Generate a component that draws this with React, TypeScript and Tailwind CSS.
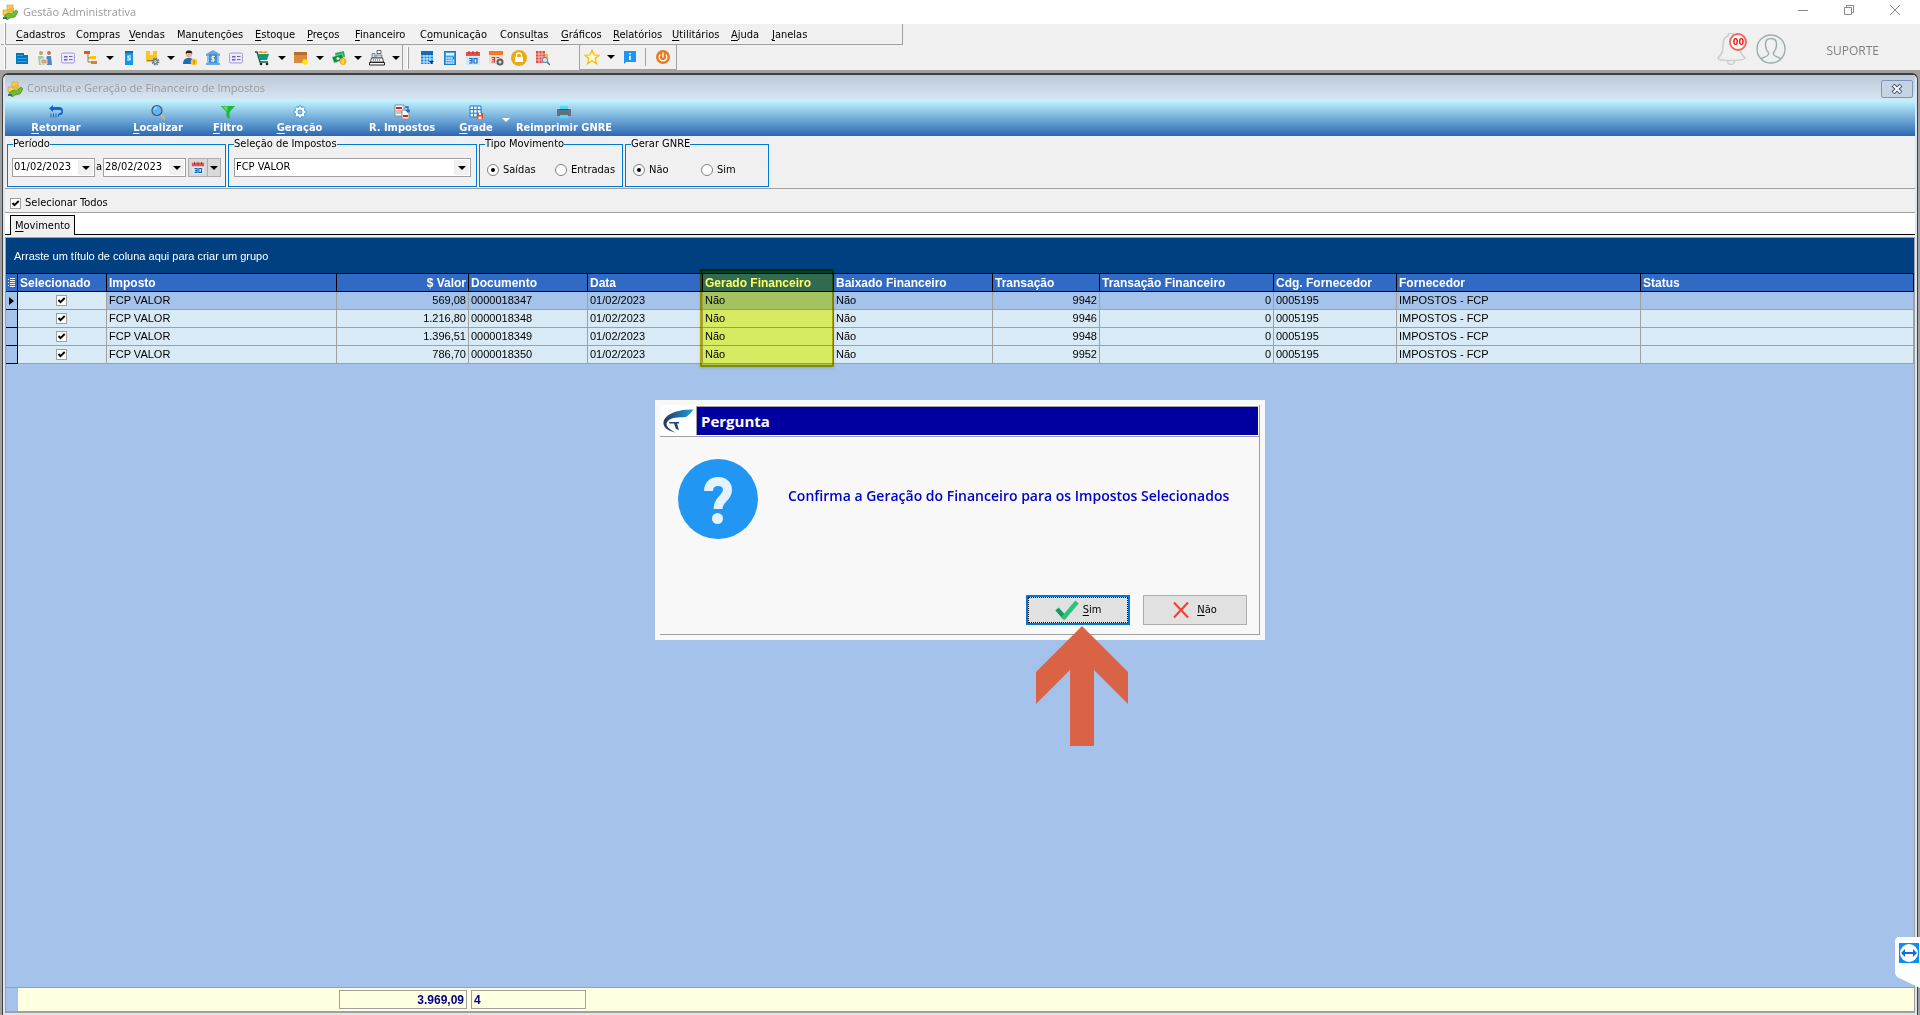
import { useState } from 'react';
import type { ReactNode } from 'react';

interface IconProps {
  name: string;
  className?: string;
}

interface ToolItem {
  icon: string;
  label: string;
  menu?: boolean;
}

const shapes: Record<string, ReactNode> = {
  app: (
    <>
      <path d="M5 1h6v5H5zM1 6h7v5H1z" fill="#f3cf5b" stroke="#c99a2a" strokeWidth=".6" />
      <path d="M9 3l3 1v4l-4 1-3-2" fill="#e9b93e" />
      <path d="M2 12l4-3 3 1 5-4 2 2-3 5-5 1-3 2z" fill="#6bbf2c" stroke="#3d7d18" strokeWidth=".6" />
      <path d="M1 13h4v2H1z" fill="#3d6a8a" />
    </>
  ),
  building: (
    <>
      <path d="M2 3h8v2h4v9H2z" fill="#0277bd" />
      <path d="M3 5h6v1H3zM3 8h10v1H3zM3 11h10v1H3z" fill="#2ba4f0" />
    </>
  ),
  people: (
    <>
      <circle cx="4" cy="3" r="2" fill="#c49a80" />
      <circle cx="12" cy="3" r="2" fill="#b97a5a" />
      <path d="M1 6h5l2 4v5H2z" fill="#a9c9a4" />
      <path d="M10 6h4l1 9h-5l-2-4z" fill="#4a86c8" />
      <path d="M4 9h6v5H4z" fill="#d9a184" stroke="#fff" strokeWidth=".7" />
    </>
  ),
  card: (
    <>
      <rect x="1.500" y="3" width="13" height="10" rx="1.500" fill="#eeeafc" stroke="#a79bdc" />
      <path d="M4 6h3.500v1.500H4zM4 9h3.500v1.500H4zM9 6h3.500v1H9zM9 9h3.500v1H9z" fill="#6f60bd" />
    </>
  ),
  tree: (
    <>
      <path d="M5 4v8h4M5 8h4" fill="none" stroke="#8a7a60" />
      <path d="M1 1h6v3H1z" fill="#e6562c" />
      <path d="M7 6h6v3H7z" fill="#ffc400" />
      <path d="M8 11h6v3H8z" fill="#f07a1c" />
    </>
  ),
  book: (
    <>
      <path d="M4 1h8v14H4z" fill="#1098e6" />
      <path d="M4 1h8v2H4z" fill="#0a6cab" />
      <path d="M10 6H7v2h2v2H6" fill="none" stroke="#fff" strokeWidth="1.200" />
    </>
  ),
  boxgear: (
    <>
      <path d="M2 1h11v11H2z" fill="#fcc42c" />
      <path d="M6 1h3v4H6z" fill="#fff0b8" />
      <path d="M3 10h6v1H3z" fill="#a77a12" />
      <circle cx="11.500" cy="11.500" r="3" fill="none" stroke="#5c7a94" strokeWidth="1.800" strokeDasharray="1.500 .8" />
      <circle cx="11.500" cy="11.500" r="2" fill="none" stroke="#4f6f8c" />
    </>
  ),
  user: (
    <>
      <circle cx="7" cy="4.500" r="3" fill="#f2b07d" />
      <path d="M3.800 4C3.500 1 5 .5 7 .5s3.500.6 3.200 3.500L9 3H5z" fill="#222" />
      <path d="M1 14c0-4 2-6 6-6s5 2 5 6z" fill="#1e6db5" />
      <circle cx="12" cy="12" r="3.300" fill="#fcc42c" />
      <path d="M12 10v4" stroke="#b87b00" />
    </>
  ),
  bank: (
    <>
      <path d="M8 0l7 4v2H1V4zM1 13h14v2H1z" fill="#6aa9e0" />
      <path d="M2 6h3v7H2zM11 6h3v7h-3z" fill="#8fbfe8" />
      <path d="M4 4h8v9H4z" fill="#3f8fd6" />
      <path d="M10 6.500H7v2.200h2v2.200H6M8 5.500v6.500" fill="none" stroke="#fff" />
    </>
  ),
  cart: (
    <>
      <path d="M3 2l3-1 2 1 3-1 2 2H4z" fill="#f39a24" />
      <path d="M0 2h2l3 10h8" fill="none" stroke="#0b5c4a" strokeWidth="1.400" />
      <path d="M3 4h11l-2 6H5z" fill="#129a77" />
      <circle cx="6" cy="14" r="1.300" fill="#222" />
      <circle cx="12" cy="14" r="1.300" fill="#222" />
    </>
  ),
  box: (
    <>
      <path d="M1 2h13v11H1z" fill="#d98a3a" />
      <path d="M1 2h13v3H1z" fill="#b96d25" />
      <circle cx="12" cy="12" r="2.800" fill="#ffe70a" />
    </>
  ),
  money: (
    <>
      <path d="M4 3l9-2 1 6-9 2z" fill="#2fae5c" />
      <path d="M1 7l10-3 2 6-10 3z" fill="#178a45" stroke="#bfeccc" strokeWidth=".5" />
      <circle cx="7" cy="8.500" r="1.600" fill="#c8f0d4" />
      <circle cx="12" cy="11.500" r="3.400" fill="#f7b51e" />
      <path d="M12 9.500v4" stroke="#fff6c0" />
    </>
  ),
  register: (
    <>
      <path d="M8 .5h4v3H8z" fill="#fff" stroke="#444" strokeWidth=".8" />
      <path d="M3 3.500h3v4H3zM7 5h6v3H7z" fill="#b9dcf2" stroke="#555" strokeWidth=".6" />
      <path d="M2.500 8h11l1 4h-13z" fill="#fff" stroke="#333" strokeWidth=".9" />
      <path d="M4 10h8" stroke="#333" strokeDasharray="1 1" />
      <path d="M.5 12.500h15v2.500H.5z" fill="#fff" stroke="#222" />
    </>
  ),
  grid: (
    <>
      <path d="M2 2h12v12H2z" fill="#1187dc" />
      <path d="M2 6h12M2 9h12M2 12h12M5 5v9M8 5v9M11 5v9" stroke="#e8f5ff" strokeWidth=".9" />
      <path d="M2 1h12v4H2z" fill="#0a70bd" />
      <path d="M10 11h5l-2.500 3z" fill="#12395e" />
    </>
  ),
  calc: (
    <>
      <rect x="2.500" y="1.500" width="11" height="13" fill="#3fa2e8" stroke="#1b7bc4" />
      <path d="M4 3h8v2.500H4z" fill="#e6f5ff" />
      <path d="M4 8h8M4 10.500h8M4 13h8" stroke="#e6f5ff" strokeWidth="1.400" strokeDasharray="1.500 .7" />
      <path d="M11.500 7v2" stroke="#e33" />
    </>
  ),
  calendar: (
    <>
      <path d="M1 6h14v9H1z" fill="#cfe8fb" />
      <path d="M1 2h14v4H1z" fill="#ef5043" />
      <path d="M4 1v3M8 1v3M12 1v3" stroke="#9c2b2b" />
      <path d="M4 8.500h3v4.500H4M4.500 10.700H7M9 8.500h3v4.500H9z" fill="none" stroke="#1565c0" strokeWidth="1.200" />
    </>
  ),
  calgear: (
    <>
      <path d="M1 5h14v9H1z" fill="#f3ddd2" />
      <path d="M1 1h14v4H1z" fill="#f07b23" />
      <path d="M3.500 7.500h3v4.500h-3M4 9.700h2.500M8.500 7.500h2.500" fill="none" stroke="#cf3b2c" strokeWidth="1.200" />
      <circle cx="12" cy="12" r="2.500" fill="none" stroke="#50606c" strokeWidth="2" />
    </>
  ),
  lock: (
    <>
      <circle cx="8" cy="8" r="8" fill="#e8ab15" />
      <path d="M5.500 7V5.500a2.500 2.500 0 015 0V7" fill="none" stroke="#fff" strokeWidth="1.300" />
      <path d="M4 7h8v5H4z" fill="#fff" />
    </>
  ),
  search: (
    <>
      <path d="M2 1h9v12H2z" fill="#e34d43" />
      <path d="M2 4h9M2 7h9M2 10h9M5 1v12M8 1v12" stroke="#f8d4cf" strokeWidth=".8" />
      <path d="M11 4h3v4h-3z" fill="#f5c020" />
      <circle cx="11" cy="10" r="2.700" fill="#cde7f9" stroke="#5a88a8" />
      <path d="M13 12l3 3" stroke="#5b6b78" strokeWidth="1.400" />
    </>
  ),
  star: (
    <path d="M8 1.200l2 4.700 5 .4-3.800 3.300 1.200 5L8 11.900l-4.400 2.700 1.200-5L1 6.300l5-.4z" fill="#fff8dc" stroke="#fcc419" strokeWidth="1.500" />
  ),
  info: (
    <>
      <path d="M2 2h12v11H4l-2 2z" fill="#1e95f3" />
      <path d="M7.200 4h1.600v1.600H7.200zM7.200 6.800h1.600V11H7.200z" fill="#fff" />
    </>
  ),
  power: (
    <>
      <circle cx="8" cy="8" r="7" fill="#e67c1f" />
      <path d="M5.300 5.400a3.800 3.800 0 105.400 0M8 3.500v5" fill="none" stroke="#fff" strokeWidth="1.400" />
    </>
  ),
  back: (
    <>
      <path d="M1 4.500L5 1v2h6a4 4 0 014 4v1a3 3 0 01-3 3h-1V9h1a1.500 1.500 0 000-3H5v2z" fill="#1763cf" />
      <path d="M3 9.500v4M5.500 9.500v4M8 9.500v4M10.500 10v3" stroke="#1763cf" />
    </>
  ),
  lens: (
    <>
      <circle cx="7" cy="6.500" r="5" fill="#62b8f5" stroke="#47566a" strokeWidth="1.200" />
      <path d="M4 6a3 3 0 013-2.500" fill="none" stroke="#c9ebff" />
      <path d="M11 11l4 4" stroke="#e0b469" strokeWidth="2" />
    </>
  ),
  funnel: (
    <>
      <path d="M1 2h14l-5.500 6v7l-3-2V8z" fill="#21b43a" />
      <path d="M3 2.500h5l-1 5z" fill="#5fe06c" />
    </>
  ),
  gear: (
    <>
      <path
        d="M6.700 2h2.600l.4 1.700 1.500-.9 1.900 1.900-.9 1.500 1.800.5v2.600l-1.800.4.9 1.600-1.900 1.800-1.500-.9-.4 1.800H6.700l-.4-1.800-1.500.9-1.900-1.800.9-1.600L2 9.300V6.700l1.800-.5-.9-1.500 1.900-1.900 1.500.9z"
        fill="#fff"
        stroke="#3b9ad8"
        strokeWidth=".9"
      />
      <circle cx="8" cy="8" r="2" fill="#8ec8ea" stroke="#3b9ad8" />
    </>
  ),
  docs: (
    <>
      <path d="M1 1h9v11H1z" fill="#fff" stroke="#8b8b8b" />
      <path d="M2 3h6v2H2z" fill="#e01f1f" />
      <path d="M2 7h6M2 9h6" stroke="#888" />
      <path d="M8 6h7v9H8z" fill="#fff" stroke="#8b8b8b" />
      <path d="M9 11h5v2H9z" fill="#e01f1f" />
      <path d="M11 3h3v5M12 6l2 2 2-2" fill="none" stroke="#1d6fb8" strokeWidth="1.300" />
    </>
  ),
  gridsave: (
    <>
      <path d="M2 2h11v11H2z" fill="#e8f7ff" stroke="#1b7fd0" />
      <path d="M2 5.600h11M2 9.200h11M5.600 2v11M9.200 2v11" stroke="#1b7fd0" />
      <path d="M9 9h6v6H9z" fill="#f04a12" />
      <path d="M11 9h2v2h-2zM10.500 12.500h3V15h-3z" fill="#fff" />
    </>
  ),
  printer: (
    <>
      <path d="M4 2h8v4H4zM4 11h8v3H4z" fill="#45ddff" />
      <path d="M1 5h14v7h-3v-1H4v1H1z" fill="#62707b" />
      <path d="M4 5h8v1H4z" fill="#3c464d" />
    </>
  ),
};

function Icon({ name, className = 'size-4' }: IconProps) {
  return (
    <svg viewBox="0 0 16 16" className={`${className} shrink-0`} aria-hidden="true">
      {shapes[name]}
    </svg>
  );
}

function Caret({ className = 'text-black' }: { className?: string }) {
  return (
    <svg viewBox="0 0 8 4" className={`w-2 h-1 shrink-0 ${className}`} aria-hidden="true">
      <path d="M0 0h8L4 4z" fill="currentColor" />
    </svg>
  );
}

// Label with its accelerator letter underlined
function Hot({ text, at = 0 }: { text: string; at?: number }) {
  return (
    <>
      {text.slice(0, at)}
      <span className="underline underline-offset-2">{text.charAt(at)}</span>
      {text.slice(at + 1)}
    </>
  );
}

const menu = [
  { label: 'Cadastros', at: 0, width: 'w-[60px]' },
  { label: 'Compras', at: 2, width: 'w-[53px]' },
  { label: 'Vendas', at: 0, width: 'w-[48px]' },
  { label: 'Manutenções', at: 2, width: 'w-[78px]' },
  { label: 'Estoque', at: 0, width: 'w-[52px]' },
  { label: 'Preços', at: 0, width: 'w-[48px]' },
  { label: 'Financeiro', at: 0, width: 'w-[65px]' },
  { label: 'Comunicação', at: 1, width: 'w-[80px]' },
  { label: 'Consultas', at: 5, width: 'w-[61px]' },
  { label: 'Gráficos', at: 0, width: 'w-[52px]' },
  { label: 'Relatórios', at: 0, width: 'w-[59px]' },
  { label: 'Utilitários', at: 0, width: 'w-[59px]' },
  { label: 'Ajuda', at: 0, width: 'w-[41px]' },
  { label: 'Janelas', at: 0, width: 'w-[48px]' },
];

const mainTools: ToolItem[] = [
  { icon: 'building', label: 'Empresas' },
  { icon: 'people', label: 'Clientes' },
  { icon: 'card', label: 'Cartões' },
  { icon: 'tree', label: 'Plano de contas', menu: true },
  { icon: 'book', label: 'Tabela de preços' },
  { icon: 'boxgear', label: 'Produtos', menu: true },
  { icon: 'user', label: 'Vendedores' },
  { icon: 'bank', label: 'Bancos' },
  { icon: 'card', label: 'Cheques' },
];

const movementTools: ToolItem[] = [
  { icon: 'cart', label: 'Compras', menu: true },
  { icon: 'box', label: 'Estoque', menu: true },
  { icon: 'money', label: 'Financeiro', menu: true },
  { icon: 'register', label: 'Caixa', menu: true },
];

const utilityTools: ToolItem[] = [
  { icon: 'grid', label: 'Agenda' },
  { icon: 'calc', label: 'Calculadora' },
  { icon: 'calendar', label: 'Calendário' },
  { icon: 'calgear', label: 'Configurar calendário' },
  { icon: 'lock', label: 'Bloquear' },
  { icon: 'search', label: 'Pesquisar' },
];

const actions = [
  { label: 'Retornar', icon: 'back', at: 0, width: 'w-[102px]' },
  { label: 'Localizar', icon: 'lens', at: 0, width: 'w-[102px]' },
  { label: 'Filtro', icon: 'funnel', at: 0, width: 'w-[38px]' },
  { label: 'Geração', icon: 'gear', at: 0, width: 'w-[105px]' },
  { label: 'R. Impostos', icon: 'docs', at: -1, width: 'w-[100px]' },
  { label: 'Grade', icon: 'gridsave', at: 0, width: 'w-[48px]' },
];

const columns = [
  { label: 'Selecionado', width: 'w-[89px]' },
  { label: 'Imposto', width: 'w-[230px]' },
  { label: '$ Valor', width: 'w-[132px]', right: true },
  { label: 'Documento', width: 'w-[119px]' },
  { label: 'Data', width: 'w-[115px]' },
  { label: 'Gerado Financeiro', width: 'w-[131px]', highlight: true },
  { label: 'Baixado Financeiro', width: 'w-[159px]' },
  { label: 'Transação', width: 'w-[107px]' },
  { label: 'Transação Financeiro', width: 'w-[174px]' },
  { label: 'Cdg. Fornecedor', width: 'w-[123px]' },
  { label: 'Fornecedor', width: 'w-[244px]' },
  { label: 'Status', width: '' },
];

const rows = [
  { valor: '569,08', documento: '0000018347', transacao: '9942' },
  { valor: '1.216,80', documento: '0000018348', transacao: '9946' },
  { valor: '1.396,51', documento: '0000018349', transacao: '9948' },
  { valor: '786,70', documento: '0000018350', transacao: '9952' },
];

function ToolButtons({ items }: { items: ToolItem[] }) {
  return (
    <>
      {items.map((item) => (
        <div key={item.icon + item.label} className="flex items-center">
          <button type="button" aria-label={item.label} className="w-[23px] h-6 flex items-center justify-center">
            <Icon name={item.icon} />
          </button>
          {item.menu && (
            <button type="button" aria-label={`${item.label}: opções`} className="w-[15px] h-6 flex items-center justify-center">
              <Caret />
            </button>
          )}
        </div>
      ))}
    </>
  );
}

function Grip() {
  return <div className="w-[2px] h-[22px] border-l border-white bg-[#a0a0a0] shrink-0" />;
}

function Check({ checked, label, onChange }: { checked: boolean; label: string; onChange: () => void }) {
  return (
    <span className="relative inline-block size-[11px] shrink-0 align-middle">
      <input
        type="checkbox"
        aria-label={label}
        checked={checked}
        onChange={onChange}
        className="appearance-none block size-[11px] bg-white border border-[#a0a0a0]"
      />
      {checked && (
        <svg viewBox="0 0 11 11" className="absolute inset-0 pointer-events-none" aria-hidden="true">
          <path d="M2.500 5l2 2.200L8.700 3" fill="none" stroke="#000" strokeWidth="1.900" />
        </svg>
      )}
    </span>
  );
}

function RadioGroup({ legend, name, options }: { legend: string; name: string; options: string[] }) {
  const [value, setValue] = useState(options[0]);
  return (
    <fieldset className="w-[144px] min-w-0 h-[50px] border border-[#0078d7]">
      <legend className="ml-[5px] leading-[14px]">{legend}</legend>
      <div className="flex pl-[7px] pt-3">
        {options.map((option) => (
          <label key={option} className="w-[68px] shrink-0 flex items-center gap-1 leading-[14px]">
            <input
              type="radio"
              name={name}
              checked={value === option}
              onChange={() => setValue(option)}
              className="appearance-none size-3 shrink-0 rounded-full border border-[#808080] bg-white flex items-center justify-center checked:before:block checked:before:size-1 checked:before:rounded-full checked:before:bg-black"
            />
            {option}
          </label>
        ))}
      </div>
    </fieldset>
  );
}

function DateField({ label, initial }: { label: string; initial: string }) {
  const [value, setValue] = useState(initial);
  return (
    <div className="w-[83px] h-[19px] flex bg-white border border-[#a0a0a0] p-px">
      <input aria-label={label} value={value} onChange={(e) => setValue(e.target.value)} className="w-[64px] min-w-0 outline-none" />
      <button type="button" aria-label={`Abrir calendário: ${label}`} className="flex-1 bg-[#f0f0f0] flex items-center justify-center">
        <Caret />
      </button>
    </div>
  );
}

function TitleBar() {
  return (
    <header className="h-6 flex items-center bg-white pl-[2px] pr-[2px]">
      <Icon name="app" />
      <h1 className="ml-[5px] flex-1 font-['Open_Sans',sans-serif] text-[11px] text-[#999999]">Gestão Administrativa</h1>
      <div className="flex text-[#888888] pb-1">
        <button type="button" aria-label="Minimizar" className="w-[46px] flex justify-center">
          <svg viewBox="0 0 10 10" className="size-[10px]"><path d="M0 5.500h10" stroke="currentColor" /></svg>
        </button>
        <button type="button" aria-label="Restaurar" className="w-[46px] flex justify-center">
          <svg viewBox="0 0 10 10" className="size-[10px]">
            <path d="M.5 2.500h7v7h-7zM2.500 2.500v-2h7v7h-2" fill="none" stroke="currentColor" />
          </svg>
        </button>
        <button type="button" aria-label="Fechar" className="w-[46px] flex justify-center">
          <svg viewBox="0 0 10 10" className="size-[10px]"><path d="M0 0l10 10M10 0L0 10" stroke="currentColor" /></svg>
        </button>
      </div>
    </header>
  );
}

function Support() {
  return (
    <div className="flex items-center pr-[41px] pt-1">
      <div className="relative w-[30px] h-8 mr-[9px]">
        <svg viewBox="0 0 30 32" className="w-[30px] h-8" fill="none" stroke="#cccccc" strokeWidth="1.500" aria-hidden="true">
          <path d="M11 3a3 3 0 016 0c4 1 6 4 6 9 0 7 1 9 5 13-1 2-7 2.500-14 2.500S1 27 1 25c4-4 5-6 5-13 0-5 1-8 5-9zM10.500 28a3.500 3.500 0 007 0" />
        </svg>
        <span className="absolute left-3 top-0 size-[18px] rounded-full bg-white border-2 border-[#f0695c] text-[#ee1111] font-bold text-[9px] leading-[14px] text-center">
          00
        </span>
      </div>
      <svg viewBox="0 0 30 30" className="size-[30px] mr-10" fill="none" stroke="#9aadad" strokeWidth="1.400" aria-hidden="true">
        <circle cx="15" cy="15" r="14" />
        <path d="M5 25c2-2 6-2 7.500-4.500v-2C10 16 9.500 13 9.500 10c0-3.500 2-5.500 5.500-5.500s5.500 2 5.500 5.500c0 3-.5 6-3 8.500v2C19 23 23 23 25 25" />
      </svg>
      <a href="#suporte" className="pt-1 font-['Open_Sans',sans-serif] text-[12px] text-[#808080]">SUPORTE</a>
    </div>
  );
}

function TopBars() {
  return (
    <div className="h-[46px] flex justify-between bg-[#f0f0f0]">
      <div className="pl-px">
        <nav className="w-[902px] h-[21px] flex items-center border-r border-b border-[#a0a0a0] pl-[3px]">
          <Grip />
          <div className="flex pl-[10px] pt-[3px]">
            {menu.map((item) => (
              <button key={item.label} type="button" className={`${item.width} text-left whitespace-nowrap`}>
                <Hot text={item.label} at={item.at} />
              </button>
            ))}
          </div>
        </nav>
        <div className="h-[25px] flex">
          <div className="w-[402px] flex items-center border-r border-[#a0a0a0] pl-[3px]">
            <Grip />
            <div className="flex pl-1">
              <ToolButtons items={mainTools} />
            </div>
            <div className="flex pl-1">
              <ToolButtons items={movementTools} />
            </div>
          </div>
          <div className="w-[177px] flex items-center border-r border-[#a0a0a0] pl-1">
            <Grip />
            <div className="flex pl-[6px]">
              <ToolButtons items={utilityTools} />
            </div>
          </div>
          <div className="w-[97px] flex items-center border-r border-b border-[#a0a0a0]">
            <ToolButtons items={[{ icon: 'star', label: 'Favoritos', menu: true }, { icon: 'info', label: 'Informações' }]} />
            <div className="w-px h-[18px] ml-1 mr-[5px] bg-[#a0a0a0]" />
            <ToolButtons items={[{ icon: 'power', label: 'Sair' }]} />
          </div>
        </div>
      </div>
      <Support />
    </div>
  );
}

function ActionBar() {
  const button = 'h-9 flex flex-col items-center pt-[4px] text-white font-bold whitespace-nowrap leading-[16px]';
  return (
    <div className="h-9 flex bg-linear-to-b from-[#c2f5ff] to-[#2c68b2]">
      {actions.map((action) => (
        <button key={action.label} type="button" className={`${button} ${action.width}`}>
          <Icon name={action.icon} />
          {action.at < 0 ? action.label : <span><Hot text={action.label} at={action.at} /></span>}
        </button>
      ))}
      <button type="button" aria-label="Opções da grade" className="w-3 flex items-center justify-center pt-1">
        <Caret className="text-white" />
      </button>
      <button type="button" className={`${button} w-[104px]`}>
        <Icon name="printer" />
        Reimprimir GNRE
      </button>
    </div>
  );
}

function Filters() {
  return (
    <form className="h-[53px] flex gap-[2px] items-start pl-[2px] pt-px border-b border-[#a0a0a0]">
      <fieldset className="w-[219px] h-[50px] border border-[#0078d7]">
        <legend className="ml-[5px] leading-[14px]">Período</legend>
        <div className="flex items-center pl-1 pt-[7px]">
          <DateField label="Data inicial" initial="01/02/2023" />
          <span className="w-2 text-center">a</span>
          <DateField label="Data final" initial="28/02/2023" />
          <button type="button" aria-label="Escolher período" className="ml-[2px] w-5 h-[19px] flex items-center justify-center bg-[#d9d9d9] border border-[#adadad]">
            <Icon name="calendar" className="size-[14px]" />
          </button>
          <button type="button" aria-label="Períodos" className="w-[13px] h-[19px] flex items-center justify-center bg-[#d9d9d9] border border-l-0 border-[#adadad]">
            <Caret />
          </button>
        </div>
      </fieldset>
      <fieldset className="w-[249px] h-[50px] border border-[#0078d7]">
        <legend className="ml-[5px] leading-[14px]">Seleção de Impostos</legend>
        <div className="relative ml-[5px] mt-[7px] w-[237px] h-[19px]">
          <select aria-label="Imposto" className="appearance-none block w-full h-full bg-white border border-[#a0a0a0] pl-px outline-none">
            <option>FCP VALOR</option>
          </select>
          <span className="absolute right-[2px] top-[2px] w-[15px] h-[15px] bg-[#f0f0f0] flex items-center justify-center pointer-events-none">
            <Caret />
          </span>
        </div>
      </fieldset>
      <RadioGroup legend="Tipo Movimento" name="tipo" options={['Saídas', 'Entradas']} />
      <RadioGroup legend="Gerar GNRE" name="gnre" options={['Não', 'Sim']} />
    </form>
  );
}

function TaxGrid({ selected, onToggle }: { selected: boolean[]; onToggle: (index: number) => void }) {
  const cell = 'border-r border-b border-[#a0a0a0] px-[2px] truncate';
  return (
    <div className="flex-1 flex flex-col min-h-0 bg-[#a4c2ea] border border-[#a0a0a0] border-b-2 font-['Liberation_Sans',sans-serif]">
      <div className="h-[35px] shrink-0 flex items-center pl-2 pt-px bg-[#004080] text-white">
        Arraste um título de coluna aqui para criar um grupo
      </div>
      <div className="flex-1">
        <table className="w-full table-fixed border-separate border-spacing-0">
          <thead>
            <tr className="h-[19px] bg-[#316ac5] text-white text-[12px] leading-[16px]">
              <th className="w-[12px] border-y border-r border-black p-0">
                <svg viewBox="0 0 7 9" className="w-[7px] h-[9px] mx-auto" aria-hidden="true">
                  <path d="M0 1.500h1M0 4.500h1M0 7.500h1M2 .5h5M2 2.500h5M2 4.500h5M2 6.500h5M2 8.500h5" stroke="#fff" />
                </svg>
              </th>
              {columns.map((column) => (
                <th
                  key={column.label}
                  className={`${column.width} relative border-y border-r border-black px-[2px] py-0 whitespace-nowrap ${column.right ? 'text-right' : 'text-left'}`}
                >
                  {column.label}
                  {column.highlight && (
                    <span className="absolute -left-[3px] -right-px -top-[5px] h-[98px] bg-[#ffff66] border-2 border-[#d0b800] mix-blend-multiply shadow-sm pointer-events-none" />
                  )}
                </th>
              ))}
            </tr>
          </thead>
          <tbody>
            {rows.map((row, index) => (
              <tr key={row.documento} className={`h-[18px] leading-[15px] ${index === 0 ? 'bg-[#a4c2ea]' : 'bg-[#d8eaf5]'}`}>
                <td className="bg-[#a4c2ea] border-r border-b border-black p-0">
                  {index === 0 && (
                    <svg viewBox="0 0 5 8" className="w-[5px] h-2 mx-auto" aria-hidden="true"><path d="M0 0l5 4-5 4z" /></svg>
                  )}
                </td>
                <td className="bg-[#d8eaf5] border-r border-b border-[#a0a0a0] p-0 pr-[2px] text-center leading-none">
                  <Check label={`Selecionar ${row.documento}`} checked={selected[index]} onChange={() => onToggle(index)} />
                </td>
                <td className={cell}>FCP VALOR</td>
                <td className={`${cell} text-right`}>{row.valor}</td>
                <td className={cell}>{row.documento}</td>
                <td className={cell}>01/02/2023</td>
                <td className={cell}>Não</td>
                <td className={cell}>Não</td>
                <td className={`${cell} text-right`}>{row.transacao}</td>
                <td className={`${cell} text-right`}>0</td>
                <td className={cell}>0005195</td>
                <td className={cell}>IMPOSTOS - FCP</td>
                <td className={cell} />
              </tr>
            ))}
          </tbody>
        </table>
      </div>
      <div className="h-6 shrink-0 flex items-center border-t border-[#a0a0a0] bg-[#ffffe1] text-[#000080] text-[12px] font-bold">
        <div className="w-3 h-full bg-[#a4c2ea]" />
        <output aria-label="Total" className="ml-[321px] w-[128px] h-[19px] border border-[#a0a0a0] px-[2px] text-right leading-[18px]">3.969,09</output>
        <output aria-label="Quantidade" className="ml-1 w-[115px] h-[19px] border border-[#a0a0a0] px-[2px] leading-[18px]">4</output>
      </div>
    </div>
  );
}

function ConfirmDialog() {
  return (
    <div
      role="dialog"
      aria-labelledby="dialog-title"
      className="absolute left-1/2 top-[400px] -translate-x-1/2 w-[610px] h-[240px] p-[5px] bg-[#f8f8f8]"
    >
      <div className="h-full flex flex-col border-r border-b border-[#a0a0a0] font-['Open_Sans',sans-serif]">
        <div className="h-8 flex bg-white border-b border-[#a0a0a0]">
          <svg viewBox="0 0 36 31" className="w-9 h-[31px] shrink-0" aria-hidden="true">
            <defs>
              <linearGradient id="swoosh" x1="0" x2="1">
                <stop offset="0" stopColor="#2a3560" />
                <stop offset="1" stopColor="#17a3dc" />
              </linearGradient>
            </defs>
            <path d="M33.500 4.500C22 4 8 7 4 15c-2.500 6 3 11 11.500 12.500C9 24.500 4.500 20 7.500 16.500 11 12 18 12.500 26 12c3-1.500 5-4.500 7.500-7.500z" fill="url(#swoosh)" />
            <path d="M9 17h10v1.500h-2l2 6.500-3-1-2-5.500H9.500z" fill="#1d4c7c" />
          </svg>
          <h2 id="dialog-title" className="flex-1 mt-px mb-px mr-px flex items-center pl-1 border-t border-l border-[#a0a0a0] bg-[#0000a0] text-white text-[15px] font-bold">
            Pergunta
          </h2>
        </div>
        <div className="flex-1 flex items-start pl-[18px] pt-[22px]">
          <svg viewBox="0 0 80 80" className="size-20 shrink-0" aria-hidden="true">
            <circle cx="40" cy="40" r="40" fill="#2196f3" />
            <path d="M30.500 32c0-6 4-9.500 9.500-9.500s9.500 3 9.500 8.500c0 8.500-9.500 8.500-9.500 19" fill="none" stroke="#e3f2fd" strokeWidth="9" />
            <circle cx="39.500" cy="59.500" r="5.500" fill="#e3f2fd" />
          </svg>
          <p className="ml-[30px] mt-[26px] text-[14px] leading-[22px] font-semibold text-[#0000c8] whitespace-nowrap">
            Confirma a Geração do Financeiro para os Impostos Selecionados
          </p>
        </div>
        <div className="flex justify-end gap-[13px] pr-3 pb-[9px] font-['DejaVu_Sans_Condensed','DejaVu_Sans',sans-serif] text-[11px]">
          <button type="button" className="w-[104px] h-[30px] bg-[#e1e1e1] border-2 border-[#0078d7]">
            <span className="h-full flex items-center justify-center gap-1 border border-dotted border-black">
              <svg viewBox="0 0 24 22" className="w-6 h-[22px]" aria-hidden="true">
                <path d="M2 10l8 9" stroke="#159a5b" strokeWidth="4.500" />
                <path d="M8 19.500L22 3" stroke="#2bc47d" strokeWidth="4.500" />
              </svg>
              <span><Hot text="Sim" /></span>
            </span>
          </button>
          <button type="button" className="w-[104px] h-[30px] flex items-center justify-center gap-2 bg-[#e1e1e1] border border-[#adadad]">
            <svg viewBox="0 0 16 18" className="w-4 h-[18px]" aria-hidden="true">
              <path d="M1 1.500l14 15M15 1.500l-14 15" stroke="#f44336" strokeWidth="2.200" />
            </svg>
            <span><Hot text="Não" /></span>
          </button>
        </div>
      </div>
      <svg viewBox="0 0 92 120" className="absolute left-[381px] top-[226px] w-[92px] h-[120px]" aria-hidden="true">
        <path d="M46 0l46 46v32L58 44v76H34V44L0 78V46z" fill="#d96344" />
      </svg>
    </div>
  );
}

export default function App() {
  const [selected, setSelected] = useState(rows.map(() => true));
  const allSelected = selected.every(Boolean);

  return (
    <div className="relative h-screen flex flex-col overflow-hidden bg-[#f0f0f0] text-black font-['DejaVu_Sans_Condensed','DejaVu_Sans',sans-serif] text-[11px]">
      <TitleBar />
      <TopBars />
      <main className="flex-1 min-h-0 flex flex-col bg-[#a0a0a0] pt-[3px] px-[2px]">
        <section className="flex-1 min-h-0 flex flex-col border-x border-t-2 border-[#404040] rounded-t-md bg-[#dce6f1] px-[2px] pb-[2px]">
          <div className="h-[25px] flex items-center pl-[2px] pt-[2px] bg-linear-to-b from-[#bccad9] to-[#d8e5f2]">
            <Icon name="app" />
            <h2 className="ml-1 flex-1 font-['Open_Sans',sans-serif] text-[11px] text-[#999999]">
              Consulta e Geração de Financeiro de Impostos
            </h2>
            <button type="button" aria-label="Fechar janela" className="mr-[2px] w-8 h-[18px] flex items-center justify-center rounded-xs border border-[#8094b8] bg-[#c5d3e3]">
              <svg viewBox="0 0 12 10" className="w-3 h-[10px]" aria-hidden="true">
                <path d="M2 1l8 8M10 1L2 9" stroke="#44506a" strokeWidth="4" />
                <path d="M2.500 1.500l7 7M9.500 1.500l-7 7" stroke="#fff" strokeWidth="2" />
              </svg>
            </button>
          </div>
          <ActionBar />
          <div className="flex-1 min-h-0 flex flex-col bg-[#f0f0f0]">
            <Filters />
            <label className="h-6 shrink-0 flex items-center gap-1 pl-[5px] pt-[5px] border-b border-[#a0a0a0]">
              <Check label="Selecionar Todos" checked={allSelected} onChange={() => setSelected(rows.map(() => !allSelected))} />
              Selecionar Todos
            </label>
            <div role="tablist" className="h-[22px] shrink-0 flex items-end pl-[5px] bg-white border-b border-black">
              <button type="button" role="tab" aria-selected="true" className="h-5 px-1 pt-px -mb-px bg-[#f0f0f0] border border-b-0 border-black">
                <Hot text="Movimento" />
              </button>
            </div>
            <div className="flex-1 min-h-0 flex flex-col pt-[2px]">
              <TaxGrid
                selected={selected}
                onToggle={(index) => setSelected(selected.map((value, i) => (i === index ? !value : value)))}
              />
            </div>
          </div>
        </section>
      </main>
      <ConfirmDialog />
      <button type="button" aria-label="Assistência remota" className="absolute right-0 bottom-[27px] w-[25px] h-[51px]">
        <svg viewBox="0 0 25 51" className="w-[25px] h-[51px]" aria-hidden="true">
          <path d="M25 0H4Q0 0 0 5v30q0 4 4 6l21 10z" fill="#fff" />
          <path d="M4 6h20v20H4z" fill="#0e8cf1" />
          <circle cx="14" cy="16" r="9" fill="#fff" />
          <path d="M6 16l4-4v3h8v-3l4 4-4 4v-3h-8v3z" fill="#0e6fd6" />
        </svg>
      </button>
    </div>
  );
}
